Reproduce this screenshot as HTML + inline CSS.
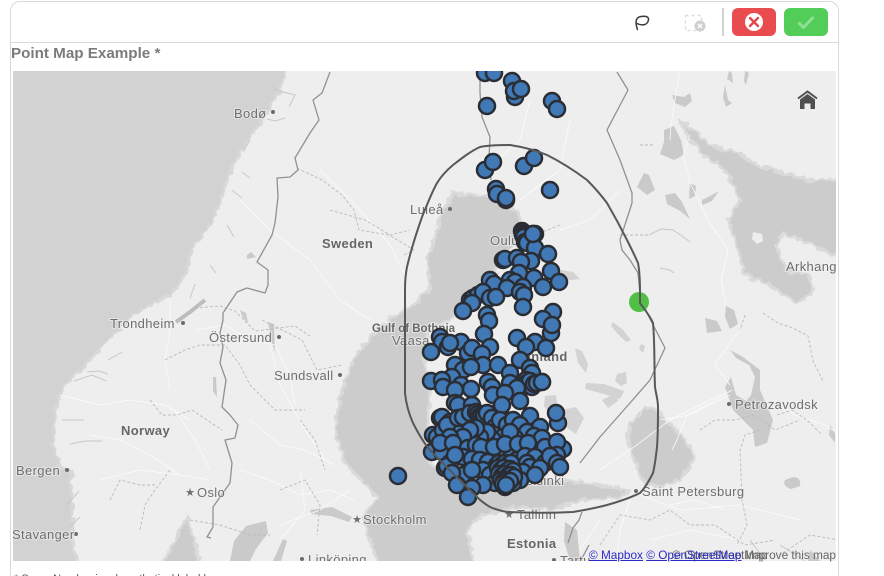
<!DOCTYPE html>
<html><head><meta charset="utf-8"><style>
html,body{margin:0;padding:0;background:#fff;width:884px;height:576px;overflow:hidden}
body{position:relative;font-family:"Liberation Sans",sans-serif}
.card{position:absolute;left:10px;top:1px;width:827px;height:600px;border:1px solid #d9d9d9;border-radius:10px;box-sizing:content-box}
.bar{position:absolute;left:11px;top:42px;width:827px;height:1px;background:#d9d9d9}
.title{position:absolute;left:11px;top:45px;font-weight:bold;font-size:15.2px;line-height:17px;color:#7b7b7b;white-space:nowrap}
.div{position:absolute;left:722px;top:8px;width:2px;height:28px;background:#d2d2d2}
.btn{position:absolute;top:8px;width:44px;height:28px;border-radius:6px}
svg{position:absolute;overflow:hidden}
.foot{position:absolute;left:14px;top:573px;font-size:11px;line-height:13px;color:#555;white-space:nowrap}
.map text{font-family:"Liberation Sans",sans-serif;font-size:13px;letter-spacing:.35px;fill:#6e6e6e;stroke:#f2f2f2;stroke-width:2px;stroke-opacity:.6;paint-order:stroke}
.map text.b{font-weight:bold;fill:#666}
.c circle{r:8px}
.attr{position:absolute;top:548px;font-size:11.8px;line-height:14px;white-space:nowrap}
.attr a{color:#2a2ac8;text-decoration:underline}
</style></head><body>
<div class="card"></div><div class="bar"></div>
<div class="title">Point Map Example *</div>

<svg style="left:630px;top:10px" width="24" height="24" viewBox="0 0 24 24" fill="none"><path d="M7.500 19.500C6 15 4 7.500 11 6.500S19.500 8 18 11.500 12 16 7 13.500" stroke="#3a3a3a" stroke-width="1.500" stroke-linecap="round"/></svg>

<svg style="left:684px;top:14px" width="24" height="19" viewBox="0 0 24 19" fill="none"><rect x="1.500" y="1.500" width="16" height="15" stroke="#dcdcdc" stroke-width="1.400" stroke-dasharray="3 3"/><circle cx="16" cy="12" r="5.500" fill="#cfcfcf"/><path d="M13.800 9.800l4.400 4.400m0-4.400l-4.400 4.400" stroke="#fff" stroke-width="1.300"/></svg>

<div class="div"></div>
<div class="btn" style="left:732px;background:#e84c4f"></div>
<svg style="left:744px;top:12px" width="20" height="20" viewBox="0 0 20 20"><circle cx="10" cy="10" r="9" fill="#fff"/><path d="M6 6l8 8m0-8l-8 8" stroke="#e2484b" stroke-width="2.400" stroke-linecap="round"/></svg>
<div class="btn" style="left:784px;background:#52cd58"></div>
<svg style="left:796px;top:13px" width="20" height="18" viewBox="0 0 20 18" fill="none"><path d="M2.500 9.500l5 5L17.500 4" stroke="#8fe093" stroke-width="3"/></svg>

<svg class="map" style="left:13px;top:71px" width="823" height="490" viewBox="13 71 823 490">
<defs><filter id="j" filterUnits="userSpaceOnUse" x="0" y="60" width="850" height="510" color-interpolation-filters="sRGB"><feTurbulence type="fractalNoise" baseFrequency=".14" numOctaves="2" seed="4" result="n"/><feDisplacementMap in="SourceGraphic" in2="n" scale="8" xChannelSelector="R" yChannelSelector="G"/></filter></defs>
<rect x="13" y="71" width="823" height="490" fill="#eeeeee"/>
<g filter="url(#j)" stroke="#dadada" stroke-width="3" fill="#cccccc">
<path fill="#d2d2d2" stroke="#d8d8d8" d="M0 60H287L282 87 270 107 257 127 243 147 230 170 223 193 210 227 192 247 187 270 173 293 137 312 110 337 90 360 63 387 55 410 52 443 60 467 70 470 72 507 72 540 80 570H0Z"/>
<path d="M160 570L187 517 203 570Z"/>
<path d="M453 193L490 196 517 210 523 233 510 250 497 270 470 300 450 320 430 327 423 357 430 390 427 437 430 463 460 490 500 487 567 480 613 487 630 491 620 497 583 500 550 510 513 507 480 517 467 530 475 570H380L370 540 363 517 377 497 345 463 335 430 340 397 353 360 373 333 393 317 410 307 430 290 427 257 433 247 440 215Z"/>
<path d="M680 120L697 133 713 147 737 153 757 165 807 180 840 180V257L800 240 783 233 777 247 787 270 810 277 812 293 797 303 773 287 743 273 740 253 728 220 740 200 727 173 707 157 690 140Z"/>
<path d="M640 413L647 407 660 413 683 437 695 457 680 480 660 487 643 483 633 457 627 437 630 423Z"/>
</g>
<path fill="#eee" stroke="none" d="M753 232l9 2 1 7-6 3-5-5z"/>
<g fill="#cacaca" stroke="none">
<path d="M730 350l13 7 17 13v20l13 30-6 23-12 4-2-17-20-20-8-23 6-10 5 18 10 6 5-6 4-18-6-12-13-7z"/>
<path d="M664 130l10-4 7 14 3 15-10 5-14-6 4-12zM644 173l5 2 6 15-8 5-10-8zM665 195l10-2 7 9 8 17-10-8-13-7zM690 183l6 3-1 10-6 3zM702 200l10-5 7-4-7 10-10 4zM729 71l3 2 1 10-6-4zM725 85l3 15 4 3-6 4-3-10zM745 71l4 2-3 12-2-4zM672 95l12 2 6-4 2 8-7 6-10-4zM726 306l8 4 4 14-8 5-5-12zM705 318l12 3 5 10-15 2zM793 477c6 0 8 4 7 9l-9 3c-6-2-8-5-6-9zM830 425l5 8v10l-6-8zM565 522l12 8 3 31h-10l-6-20zM810 550l10 11h-12z"/>
<path d="M230 561l4-20 12-15 20-5 2 12-12 16-6 12zM273 561l10-22 4 2-6 20zM310 510l22-3 20 10-3 5-18-6-20-2z"/>
<path opacity=".75" d="M613 322l10 8 8 10-5 2-8-8-7-8zM617 374l9-2 1 11-6 3-6-5zM586 383l18 1 20 7-4 8-16-5-19-5zM575 348l7 3 6 13-2 9-8-10zM562 410l14-3 8 11-8 16-10-7-7-10zM545 396l11-1 2 15-7 6-7-10zM602 400l14-7 2 8-10 7zM641 344l4 2-2 7-4-4zM561 270l12 2 7 7-9 1-7 1-5-5zM522 352l6 4 7 16-5 5-5-11z"/>
<path d="M247 255l4-3 5 5-9 2zM240 310l6 3 2 10-5-5zM268 322l6 2 1 28-4-12zM213 377l3 0 1 20-4-6z"/>
</g>
<g fill="none" stroke="#c8c8c8" stroke-width="1">
<path d="M649 235l12-6 12 1 9 6 8 6M660 268l10 2 4 3M780 545l25 16M750 540l15 20"/>
<path d="M275 90l20 5-6 12M285 118l-10 3-8-2M250 140l-7 12M242 172l8 6M232 190l10 8M227 225l7 12M210 265l6 8M195 284l-5 14M108 360l14-8M87 372l12-1 9 3M74 381l18-6 14 6M62 420l22 0M70 444l16-3 16 0M67 505l12-14M70 527l10-10"/>
<path stroke-width="4" stroke="#bdbdbd" d="M176 322L190 312 205 300"/>
</g>
<g fill="none" stroke="#fbfbfb" stroke-width=".8">
<path d="M60 395l40 10 30-5 35 5 25 15M90 435l30 5 30 15 30 20 30 5M175 410l20 30 15 30M100 480l40-10 40 5M170 300v30l-5 30 5 30M195 330l30-5 25 15 25 5 15 30 5 30M270 345l10 40 25 45 20 30M250 420l30 25 25 5 30 15M240 470l30 10 30 15 30-5 25 10M300 470l5 40-25 30M350 490l-30 20-40 15M240 200l30 30 40 30 30 40 30 20M320 170l40 40 30 35 15 30M530 100l-10 40-35 30M570 120l-10 50-40 30M560 230l30-10 30-30M600 470l30-20 40-30 50-25M660 420l30-5 40-20M740 330l-15 20-10 15 15 20M732 390l-25 15-20 10-10 25-5 10M600 520l-20 30M630 500l-10 30-3 31M640 495l40 15 60-5 60 15M650 540l40-10 50 10M670 505l25-5 30 10M690 135l-7 20 8 30 20 40 17 25-7 30 5 25M680 70l-5 30-4 25-1 15M775 400l20 15 30 10 12 8"/>
</g>
<g fill="none" stroke="#bababa" stroke-width=".9" stroke-dasharray="3 2">
<path d="M297 168l25 12 20 15 12 15 5 20 30 5 25 15-10 5M330 210l35 10 25 15 20-5M195 308l25-2 15 5 20 20 40-5 15 10M165 360l20-10 15-5 25 0 15 20 10 20 25 25 30 0M150 400l12 15 15 0 15-5 30 20M262 320l40 20 15 30 25-5M300 420l15 20 10 30M110 500l10-20 20 5 15 0M170 470l-15 20-10 15-5 25M190 520l30 5 30 10 20 0M280 490l25-10 15 25-3 30M620 235l15 0 15 0M560 225l-25 10-20 5-10 15M640 145l15 0M700 430l15-10 20 0 20-5 20 15 25-10M777 415l15-5 15 10 15 15M760 430l-15 5-5 15 2 50 5 25-10 20M745 315l-5 15M763 313l15 10 15 5 15 8 5 25 10 20M600 545l20-30 30 5 20-10 20 15 25 0 30 20 30-5M840 540l-30-5-30 20"/>
</g>
<g fill="none" stroke="#919191" stroke-width="1.300" stroke-linejoin="round">
<path d="M330 72L322 93 313 100 319 120 310 133 295 158 298 170 290 177 277 178 278 197 275 223 272 235 257 262 268 270 268 285 265 293 247 288 237 292 223 313 223 320 220 333 223 347 220 363 226 380 222 407 230 415 238 425 235 438 225 440 232 463 230 483 213 507 213 527 207 537 211 538"/>
<path d="M480 72V93L482 117 490 137 489 157 491 180"/>
<path d="M617 72L628 90 607 130 620 160 632 193 632 203 620 240 622 250 630 260 638 273 640 293 647 313 665 348 650 380 630 403 600 437 580 463"/>
<path d="M589 545l-9 17M568 543l5-15 6-8 3-8"/>
</g>
<g fill="#6b6b6b" stroke="none">
<circle cx="273" cy="112" r="2"/><circle cx="183" cy="323" r="2"/><circle cx="279" cy="337" r="2"/><circle cx="340" cy="375" r="2"/><circle cx="450" cy="209" r="2"/><circle cx="67" cy="470" r="2"/><circle cx="76" cy="534" r="2"/><circle cx="302" cy="559" r="2"/><circle cx="729" cy="404" r="2"/><circle cx="636" cy="491" r="2"/><circle cx="554" cy="560" r="2"/>
<text x="190" y="496" style="stroke:none;font-size:11px;letter-spacing:0" text-anchor="middle">★</text><text x="357" y="523" style="stroke:none;font-size:11px;letter-spacing:0" text-anchor="middle">★</text><text x="509" y="518" style="stroke:none;font-size:11px;letter-spacing:0" text-anchor="middle">★</text>
</g>
<text x="234" y="118">Bodø</text><text x="110" y="328">Trondheim</text><text x="209" y="342">Östersund</text><text x="274" y="380">Sundsvall</text><text x="410" y="214">Luleå</text><text x="490" y="245">Oulu</text><text x="392" y="345">Vaasa</text>
<text x="16" y="475">Bergen</text><text x="197" y="497">Oslo</text><text x="12" y="539">Stavanger</text><text x="363" y="524">Stockholm</text><text x="308" y="564">Linköping</text><text x="517" y="519">Tallinn</text><text x="560" y="565">Tartu</text>
<text x="516" y="485">Helsinki</text><text x="735" y="409">Petrozavodsk</text><text x="642" y="496">Saint Petersburg</text><text x="786" y="271">Arkhangelsk</text>
<text class="b" x="322" y="248">Sweden</text><text class="b" x="121" y="435">Norway</text><text class="b" x="507" y="548">Estonia</text><text class="b" x="519" y="361">Finland</text>
<text class="b" x="372" y="332" style="font-size:11.500px;letter-spacing:0">Gulf of Bothnia</text>

<circle cx="639" cy="302" r="10" fill="#51bf45"/>

<g class="c" fill="#4079b5" stroke="#2a2d33" stroke-width="2.500">
<circle cx="485" cy="73"/><circle cx="494" cy="73"/><circle cx="512" cy="81"/><circle cx="515" cy="97"/><circle cx="514" cy="91"/><circle cx="521" cy="89"/><circle cx="487" cy="106"/><circle cx="552" cy="101"/><circle cx="557" cy="109"/>
<circle cx="485" cy="170"/><circle cx="493" cy="162"/><circle cx="524" cy="166"/><circle cx="534" cy="158"/><circle cx="550" cy="190"/><circle cx="496" cy="189"/><circle cx="497" cy="194"/><circle cx="506" cy="200"/><circle cx="506" cy="198"/>
<circle cx="522" cy="231"/><circle cx="523" cy="233"/><circle cx="523" cy="235"/><circle cx="524" cy="237"/><circle cx="525" cy="242"/><circle cx="527" cy="243"/><circle cx="535" cy="234"/><circle cx="533" cy="234"/><circle cx="535" cy="248"/><circle cx="548" cy="254"/><circle cx="503" cy="260"/><circle cx="505" cy="259"/><circle cx="531" cy="261"/><circle cx="517" cy="258"/><circle cx="521" cy="262"/><circle cx="519" cy="273"/><circle cx="551" cy="271"/><circle cx="534" cy="278"/><circle cx="559" cy="282"/><circle cx="543" cy="287"/><circle cx="490" cy="280"/><circle cx="494" cy="284"/><circle cx="510" cy="280"/><circle cx="515" cy="282"/><circle cx="507" cy="288"/><circle cx="523" cy="287"/><circle cx="520" cy="292"/><circle cx="470" cy="300"/><circle cx="473" cy="298"/><circle cx="478" cy="295"/><circle cx="483" cy="292"/><circle cx="490" cy="298"/><circle cx="496" cy="297"/><circle cx="524" cy="295"/><circle cx="523" cy="307"/><circle cx="472" cy="303"/><circle cx="463" cy="311"/><circle cx="487" cy="315"/><circle cx="489" cy="321"/><circle cx="484" cy="334"/><circle cx="553" cy="312"/><circle cx="543" cy="319"/><circle cx="551" cy="333"/><circle cx="552" cy="325"/><circle cx="517" cy="338"/><circle cx="535" cy="342"/><circle cx="526" cy="347"/><circle cx="546" cy="348"/>
<circle cx="440" cy="337"/><circle cx="442" cy="342"/><circle cx="461" cy="342"/><circle cx="448" cy="347"/><circle cx="450" cy="343"/><circle cx="431" cy="352"/><circle cx="490" cy="347"/><circle cx="468" cy="353"/><circle cx="472" cy="348"/><circle cx="482" cy="354"/><circle cx="483" cy="365"/><circle cx="498" cy="365"/><circle cx="455" cy="365"/><circle cx="463" cy="370"/><circle cx="471" cy="367"/><circle cx="452" cy="377"/><circle cx="431" cy="381"/><circle cx="442" cy="380"/><circle cx="443" cy="387"/><circle cx="461" cy="385"/><circle cx="455" cy="390"/><circle cx="471" cy="389"/>
<circle cx="520" cy="360"/><circle cx="530" cy="368"/><circle cx="532" cy="373"/><circle cx="510" cy="373"/><circle cx="526" cy="380"/><circle cx="527" cy="383"/><circle cx="528" cy="386"/><circle cx="532" cy="387"/><circle cx="530" cy="381"/><circle cx="534" cy="384"/><circle cx="537" cy="383"/><circle cx="542" cy="382"/><circle cx="510" cy="383"/><circle cx="488" cy="382"/><circle cx="492" cy="387"/><circle cx="493" cy="395"/><circle cx="517" cy="388"/><circle cx="505" cy="393"/><circle cx="520" cy="401"/><circle cx="500" cy="410"/><circle cx="502" cy="405"/><circle cx="455" cy="403"/><circle cx="458" cy="405"/><circle cx="472" cy="405"/><circle cx="558" cy="423"/><circle cx="556" cy="413"/><circle cx="530" cy="416"/>
<circle cx="440" cy="418"/><circle cx="442" cy="417"/><circle cx="450" cy="422"/><circle cx="433" cy="435"/><circle cx="437" cy="437"/><circle cx="432" cy="452"/><circle cx="443" cy="430"/><circle cx="442" cy="452"/><circle cx="455" cy="430"/><circle cx="447" cy="425"/><circle cx="458" cy="418"/><circle cx="463" cy="417"/><circle cx="470" cy="413"/><circle cx="476" cy="412"/><circle cx="478" cy="414"/><circle cx="480" cy="416"/><circle cx="480" cy="418"/><circle cx="482" cy="420"/><circle cx="484" cy="415"/><circle cx="487" cy="413"/><circle cx="492" cy="418"/><circle cx="495" cy="427"/><circle cx="500" cy="420"/><circle cx="507" cy="425"/><circle cx="513" cy="420"/><circle cx="520" cy="425"/><circle cx="540" cy="427"/><circle cx="527" cy="432"/><circle cx="534" cy="436"/><circle cx="542" cy="438"/><circle cx="515" cy="438"/><circle cx="503" cy="437"/><circle cx="510" cy="432"/><circle cx="493" cy="440"/><circle cx="487" cy="432"/><circle cx="480" cy="437"/><circle cx="476" cy="428"/><circle cx="470" cy="430"/><circle cx="463" cy="437"/><circle cx="450" cy="437"/><circle cx="440" cy="443"/><circle cx="453" cy="443"/><circle cx="468" cy="448"/><circle cx="476" cy="445"/><circle cx="487" cy="453"/><circle cx="481" cy="447"/><circle cx="500" cy="453"/><circle cx="494" cy="447"/><circle cx="510" cy="448"/><circle cx="505" cy="444"/><circle cx="523" cy="447"/><circle cx="518" cy="444"/><circle cx="533" cy="450"/><circle cx="528" cy="443"/><circle cx="545" cy="447"/><circle cx="563" cy="449"/><circle cx="557" cy="442"/><circle cx="557" cy="455"/><circle cx="463" cy="457"/><circle cx="450" cy="463"/><circle cx="445" cy="468"/><circle cx="447" cy="466"/><circle cx="455" cy="455"/><circle cx="472" cy="459"/><circle cx="480" cy="460"/><circle cx="488" cy="462"/><circle cx="497" cy="465"/><circle cx="507" cy="467"/><circle cx="517" cy="460"/><circle cx="525" cy="456"/><circle cx="535" cy="457"/><circle cx="527" cy="463"/><circle cx="530" cy="467"/><circle cx="545" cy="463"/><circle cx="540" cy="468"/><circle cx="550" cy="456"/><circle cx="557" cy="463"/><circle cx="472" cy="470"/><circle cx="463" cy="475"/><circle cx="452" cy="473"/><circle cx="483" cy="470"/><circle cx="490" cy="475"/><circle cx="500" cy="473"/><circle cx="507" cy="477"/><circle cx="515" cy="473"/><circle cx="523" cy="472"/><circle cx="535" cy="475"/><circle cx="520" cy="480"/><circle cx="513" cy="483"/><circle cx="505" cy="487"/><circle cx="495" cy="483"/><circle cx="483" cy="485"/><circle cx="472" cy="488"/><circle cx="457" cy="485"/><circle cx="468" cy="497"/>
<circle cx="398" cy="476"/>
<circle cx="499" cy="463"/><circle cx="502" cy="465"/><circle cx="505" cy="463"/><circle cx="508" cy="465"/><circle cx="511" cy="463"/><circle cx="498" cy="468"/><circle cx="501" cy="470"/><circle cx="504" cy="468"/><circle cx="507" cy="471"/><circle cx="510" cy="469"/><circle cx="513" cy="471"/><circle cx="499" cy="474"/><circle cx="502" cy="476"/><circle cx="505" cy="474"/><circle cx="508" cy="476"/><circle cx="511" cy="475"/><circle cx="514" cy="477"/><circle cx="501" cy="480"/><circle cx="504" cy="481"/><circle cx="507" cy="480"/><circle cx="510" cy="481"/><circle cx="503" cy="484"/><circle cx="506" cy="485"/>
<circle cx="560" cy="467"/><circle cx="472" cy="470"/><circle cx="533" cy="234"/><circle cx="542" cy="382"/>
</g>
<path fill="none" stroke="#585858" stroke-width="2" stroke-linejoin="round" d="M405 290C405 278 406 272 407 267C411 250 416 234 422 217C427 205 431 194 437 183C442 175 447 170 453 165C462 158 471 151 480 147C490 145 500 145 510 145C523 147 535 150 547 155C561 162 575 171 587 180C594 187 601 195 607 203C614 215 621 228 627 240C631 248 635 256 638 263C640 273 640 283 640 293L640 303C645 310 650 316 653 323C655 345 654 366 655 387C656 394 658 400 658 407C658 421 658 434 657 447C656 456 655 465 653 473C649 481 645 488 640 493C630 498 618 502 607 505C596 508 585 510 573 512C551 513 529 513 507 512C501 511 495 509 490 507C485 504 481 501 477 497C461 481 445 466 430 450C423 442 418 433 413 423C409 414 406 403 405 393Z"/>
<path d="M798 98.500l9.500-7 9.500 7" fill="none" stroke="#505050" stroke-width="2"/>
<path d="M800 109V99.500l7.500-5.500 7.500 5.500V109H810.500V103.500H804.500V109Z" fill="#505050"/>
</svg>

<div class="attr" style="left:672px;color:#666">© OpenStreetMap</div>
<div class="attr" style="right:48px;color:#666">Improve this map</div>
<div class="attr" style="left:589px"><a>© Mapbox</a> <a>© OpenStreetMap</a></div>
<div class="foot">* Some Number is a hypothetical label here</div>
</body></html>
